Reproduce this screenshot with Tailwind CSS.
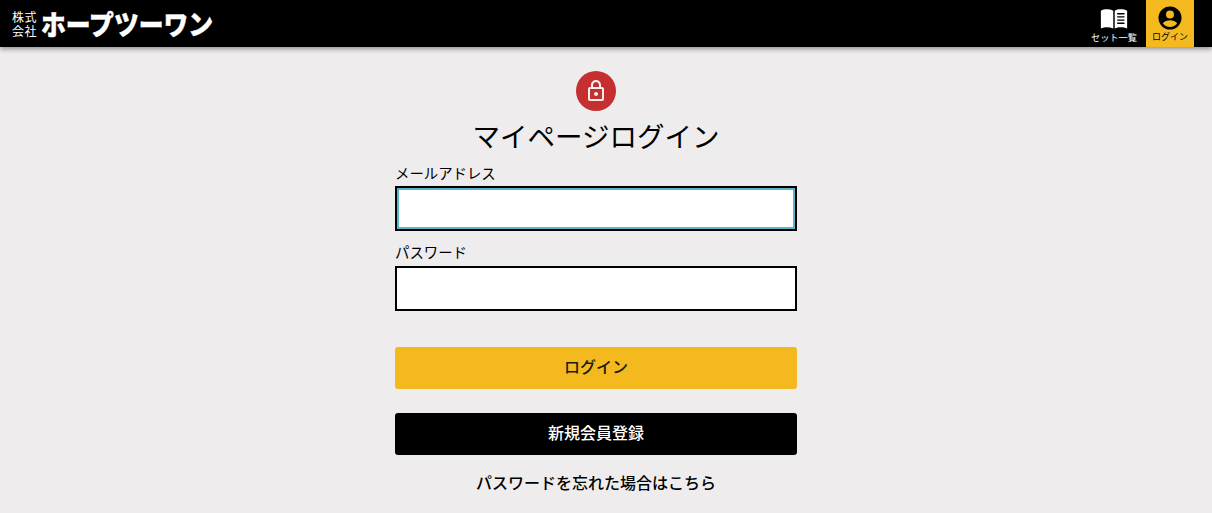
<!DOCTYPE html>
<html lang="ja">
<head>
<meta charset="utf-8">
<script src="https://cdn.jsdelivr.net/npm/@tailwindcss/browser@4"></script>
</head>
<body class="m-0 h-[513px] overflow-hidden bg-[#eeeced] font-['Noto_Sans_CJK_JP','Noto_Sans',sans-serif] text-black">
<header class="relative z-10 flex h-[47px] items-center justify-between bg-black pl-3 pr-[18px] shadow-[0_2px_5px_rgba(0,0,0,0.4)]">
  <div class="flex items-center text-white">
    <div class="w-[25px] text-[12px] leading-[14px] tracking-[0.5px]">株式<br>会社</div>
    <div class="ml-1 scale-y-[1.12] text-[24.800px] leading-none font-black whitespace-nowrap [-webkit-text-stroke:0.4px_white]">ホープツーワン</div>
  </div>
  <nav class="flex h-full">
    <a class="flex w-[60px] flex-col items-center pr-[4px] pt-[8px] text-white">
      <svg width="28" height="21" viewBox="0 0 26 20" fill="none">
        <path d="M0.500 2.500C4 0.800 8.500 0.800 12.300 2.500V19.500C8.500 17.800 4 17.800 0.500 19.500Z" fill="#fff"/>
        <path d="M13.700 2.500C17 0.800 21.800 0.800 25.500 2.500V19.500C21.800 17.800 17 17.800 13.700 19.500Z" fill="#fff"/>
        <path d="M16 5.500H23M16 8.500H23M16 11.500H23M16 14.500H23" stroke="#000" stroke-width="1.300"/>
      </svg>
      <span class="mt-[2px] text-[9.200px] leading-[12px] whitespace-nowrap">セット一覧</span>
    </a>
    <a class="flex w-[48px] flex-col items-center bg-[#f3b91f] pt-[6px] text-black">
      <svg width="24" height="24" viewBox="0 0 24 24" fill="#000">
        <path d="M12 0.500A11.500 11.500 0 1 0 12 23.500A11.500 11.500 0 1 0 12 0.500ZM12 4.500A4 4 0 1 1 12 12.500A4 4 0 1 1 12 4.500ZM12 21C9 21 6.300 19.500 4.800 17.200C6 15.300 9.500 14.300 12 14.300C14.500 14.300 18 15.300 19.200 17.200C17.700 19.500 15 21 12 21Z"/>
      </svg>
      <span class="mt-[1px] text-[9px] leading-[12px] whitespace-nowrap">ログイン</span>
    </a>
  </nav>
</header>
<main class="ml-[395px] flex w-[402px] flex-col items-center pt-[24px]">
  <div class="flex size-10 items-center justify-center rounded-full bg-[#c62f2f]">
    <svg width="24" height="24" viewBox="0 0 24 24" fill="#fdeeee">
      <path d="M18 8h-1V6c0-2.760-2.240-5-5-5S7 3.240 7 6v2H6c-1.100 0-2 .9-2 2v10c0 1.100.9 2 2 2h12c1.100 0 2-.9 2-2V10c0-1.100-.9-2-2-2zM9 6c0-1.660 1.340-3 3-3s3 1.340 3 3v2H9V6zm9 14H6V10h12v10zm-6-3c1.100 0 2-.9 2-2s-.9-2-2-2-2 .9-2 2 .9 2 2 2z"/>
    </svg>
  </div>
  <h1 class="mt-[5px] text-[27.500px] leading-[38px] font-normal whitespace-nowrap">マイページログイン</h1>
  <form class="flex w-full flex-col">
    <label class="mt-[9px] text-[14.400px] leading-[20px]">メールアドレス</label>
    <div class="mt-[3px] h-[45px] border-2 border-black bg-white shadow-[inset_0_0_0_2px_#5cb6c9]"></div>
    <label class="mt-[11px] text-[14.400px] leading-[20px]">パスワード</label>
    <div class="mt-[4px] h-[45px] border-2 border-black bg-white"></div>
    <button type="button" class="mt-[36px] h-[42px] rounded-[3px] bg-[#f3b91f] pb-[4px] text-[16px] font-medium text-[#1d1a10]">ログイン</button>
    <button type="button" class="mt-[24px] h-[42px] rounded-[3px] bg-black pb-[4px] text-[16px] font-medium text-white">新規会員登録</button>
    <a class="mt-[15px] text-center text-[16px] leading-[24px] font-medium">パスワードを忘れた場合はこちら</a>
  </form>
</main>
</body>
</html>
